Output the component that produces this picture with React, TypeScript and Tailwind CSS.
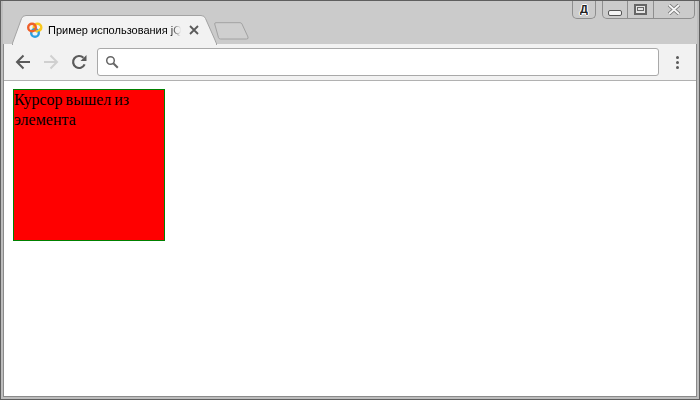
import React from 'react';

// ─── Title bar pieces ─────────────────────────────────────────────────────────

function Favicon() {
	return (
		<svg width="16" height="16" viewBox="0 0 16 16" fill="none" className="shrink-0">
			<circle cx="10.5" cy="5.5" r="3.8" stroke="#f9c81e" strokeWidth="2.4" />
			<circle cx="8" cy="11" r="3.8" stroke="#2b9fe0" strokeWidth="2.4" />
			<circle cx="5" cy="5.5" r="3.8" stroke="#ee5f2a" strokeWidth="2.4" />
			<path d="M9 9.6c2-.3 3.6-1.2 4.6-3" stroke="#f9c81e" strokeWidth="2" />
		</svg>
	);
}

function Tab() {
	return (
		<div className="relative w-[205px] h-[29px] self-end shrink-0 -mr-[3px] z-10">
			<svg width="205" height="30" viewBox="0 0 205 30" className="absolute inset-0">
				<path
					d="M0 29.5 L9.5 3.5 Q10.5 0.5 14 0.5 L189 0.5 Q192.5 0.5 193.5 3.5 L203 25 Q204 28 205 29.5 Z"
					fill="#f2f2f2"
					stroke="#a3a3a3"
				/>
				<path d="M1 30 H204" stroke="#f2f2f2" strokeWidth="2" />
			</svg>
			<div className="relative flex items-center h-[30px] pl-[15px]">
				<Favicon />
				<span className="ml-[5px] w-[133px] overflow-hidden whitespace-nowrap text-[11px] text-black [font-family:'Liberation_Sans',Arial,sans-serif] [mask-image:linear-gradient(to_right,black_122px,transparent_133px)]">
					Пример использования jQu
				</span>
				<svg width="10" height="10" viewBox="0 0 10 10" className="ml-[8px] shrink-0">
					<path d="M1 1l8 8M9 1l-8 8" stroke="#5a5a5a" strokeWidth="1.8" />
				</svg>
			</div>
		</div>
	);
}

function NewTab() {
	return (
		<svg width="35" height="18" viewBox="0 0 35 18" className="self-end mb-[4px] shrink-0">
			<path
				d="M0.7 2 Q0.5 0.7 2 0.7 L26 0.7 Q27.5 0.7 28 2 L34 15 Q34.7 17 32.5 17 L6.5 17 Q5 17 4.5 15.7 Z"
				fill="#cfcfcf"
				stroke="#a2a2a2"
			/>
		</svg>
	);
}

function WindowButtons() {
	return (
		<div className="ml-auto flex items-start shrink-0">
			<div className="flex items-center justify-center w-[24px] h-[18px] border border-t-0 border-[#8e8e8e] rounded-b-[5px]">
				<span className="text-[11px] leading-none font-bold text-[#222] [font-family:'Liberation_Sans',sans-serif] [text-shadow:1px_0_0_#fff,-1px_0_0_#fff,0_1px_0_#fff,0_-1px_0_#fff]">
					Д
				</span>
			</div>
			<div className="flex h-[18px] ml-[6px] border border-t-0 border-[#8e8e8e] rounded-b-[5px]">
				<div className="flex items-center justify-center w-[25px] border-r border-[#8e8e8e]">
					<span className="mt-[6px] w-[14px] h-[6px] border border-[#555] rounded-[2px] bg-[#f4f4f4]" />
				</div>
				<div className="flex items-center justify-center w-[26px] border-r border-[#8e8e8e]">
					<span className="mb-[1px] w-[13px] h-[11px] border-2 border-[#666] bg-[#e4e4e4] flex items-center justify-center">
						<span className="w-[7px] h-[4px] border border-[#666]" />
					</span>
				</div>
				<div className="flex items-center justify-center w-[40px]">
					<svg width="14" height="11" viewBox="0 0 14 11">
						<path d="M2 1l10 9M12 1L2 10" stroke="#777" strokeWidth="3.6" />
						<path d="M2 1l10 9M12 1L2 10" stroke="#f6f6f6" strokeWidth="1.8" />
					</svg>
				</div>
			</div>
		</div>
	);
}

// ─── Toolbar ──────────────────────────────────────────────────────────────────

function Arrow({ color, flip }: { color: string; flip?: boolean }) {
	return (
		<svg width="16" height="16" viewBox="0 0 16 16" className={flip ? 'rotate-180' : ''}>
			<path d="M15 8H2M8.5 1.5L2 8l6.5 6.5" fill="none" stroke={color} strokeWidth="2" />
		</svg>
	);
}

function Toolbar() {
	return (
		<div className="flex items-center h-[37px] bg-[#f2f2f2] border-b border-[#b1b1b1] pl-[11px] pr-[17px]">
			<Arrow color="#5a5a5a" />
			<span className="ml-[12px]">
				<Arrow color="#d0d0d0" flip />
			</span>
			<svg width="16" height="16" viewBox="0 0 16 16" className="ml-[12px]">
				<path d="M13.6 10.4A6 6 0 1 1 12.4 3.8" fill="none" stroke="#5a5a5a" strokeWidth="2.2" />
				<path d="M9.5 7h6V1z" fill="#5a5a5a" />
			</svg>
			<div className="flex items-center flex-1 h-[28px] ml-[10px] pl-[7px] bg-white border border-[#a9a9a9] rounded-[3px]">
				<svg width="14" height="14" viewBox="0 0 14 14">
					<circle cx="5.5" cy="5.5" r="3.8" fill="none" stroke="#666" strokeWidth="1.5" />
					<path d="M8.3 8.3l4.5 4.5" stroke="#666" strokeWidth="2" />
				</svg>
			</div>
			<div className="flex flex-col gap-[2px] ml-[17px]">
				<span className="w-[3px] h-[3px] rounded-full bg-[#5a5a5a]" />
				<span className="w-[3px] h-[3px] rounded-full bg-[#5a5a5a]" />
				<span className="w-[3px] h-[3px] rounded-full bg-[#5a5a5a]" />
			</div>
		</div>
	);
}

// ─── App ──────────────────────────────────────────────────────────────────────

export default function App() {
	return (
		<div className="flex flex-col w-[700px] h-[400px] overflow-hidden bg-[#cbcbcb] border border-[#5f5f5f]">
			<div className="flex flex-col flex-1 border-[2px] border-t-0 border-[#bdbdbd]">
				<div className="flex h-[43px] pl-[9px] pr-[2px] border-b border-[#a3a3a3] box-content -mb-[1px]">
					<Tab />
					<NewTab />
					<WindowButtons />
				</div>
				<div className="flex flex-col flex-1 border-x border-b border-[#8a8a8a]">
					<Toolbar />
					<div className="flex-1 bg-white p-[8px] pl-[9px]">
						<div className="w-[152px] h-[152px] bg-[#ff0000] border border-[#008000] text-[16px] leading-[20px] text-black [word-spacing:-1px] [font-family:'Liberation_Serif','Times_New_Roman',serif]">
							Курсор вышел из элемента
						</div>
					</div>
				</div>
			</div>
		</div>
	);
}
